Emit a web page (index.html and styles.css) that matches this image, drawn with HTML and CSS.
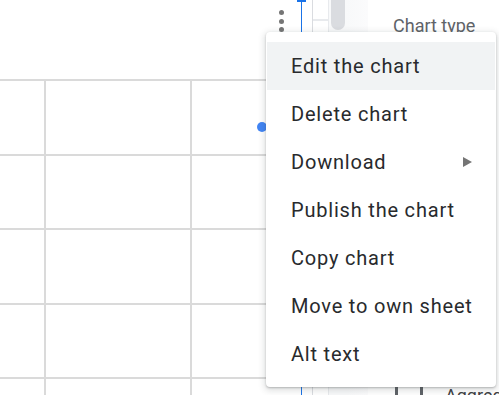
FILE: index.html
```html
<!DOCTYPE html>
<html>
<head>
<meta charset="utf-8">
<link rel="stylesheet" href="styles.css">
</head>
<body>
<div class="page">
  <div class="chart">
    <div class="chart-top">
      <div class="kebab"><span></span><span></span><span></span></div>
    </div>
    <div class="grid">
      <span class="dot"></span>
    </div>
  </div>
  <div class="sheet-col">
    <div class="col-a"><span class="blue-cap"></span></div>
    <div class="col-b"></div>
    <div class="col-c"><span class="thumb"></span></div>
    <div class="col-d"></div>
  </div>
  <div class="panel">
    <div class="panel-title">Chart type</div>
    <div class="panel-spacer"></div>
    <div class="panel-bottom">
      <span class="bar"></span>
      <span class="bar"></span>
      <span class="agg">Aggregate</span>
    </div>
  </div>
</div>

<div class="menu">
  <div class="item active">Edit the chart</div>
  <div class="item">Delete chart</div>
  <div class="item">Download<span class="arrow"></span></div>
  <div class="item">Publish the chart</div>
  <div class="item">Copy chart</div>
  <div class="item">Move to own sheet</div>
  <div class="item">Alt text</div>
</div>
</body>
</html>
```

FILE: styles.css
```css
* { box-sizing: border-box; }
html, body {
  margin: 0;
  padding: 0;
  width: 499px;
  height: 395px;
  overflow: hidden;
  background: #fff;
  font-family: Roboto, "Liberation Sans", sans-serif;
}
.page {
  display: flex;
  height: 395px;
}
.chart {
  width: 297px;
  flex-shrink: 0;
  display: flex;
  flex-direction: column;
}
.chart-top {
  height: 79px;
  display: flex;
  justify-content: flex-end;
  padding: 10px 13px 0 0;
}
.kebab {
  display: flex;
  flex-direction: column;
  gap: 3.5px;
}
.kebab span {
  width: 5px;
  height: 5px;
  border-radius: 50%;
  background: #757575;
}
.grid {
  flex: 1;
  position: relative;
  background-image:
    linear-gradient(to right, transparent 0 44px, #dadada 44px 46px, transparent 46px 190px, #dadada 190px 192px, transparent 192px),
    linear-gradient(to bottom, #dadada 0 2px, transparent 2px 75px, #dadada 75px 77px, transparent 77px);
  background-size: 100% 100%, 100% 149px;
  background-repeat: no-repeat, repeat-y;
}
.dot {
  position: absolute;
  left: 257px;
  top: 43px;
  width: 10px;
  height: 10px;
  border-radius: 50%;
  background: #4285f4;
}
.sheet-col {
  width: 71px;
  flex-shrink: 0;
  display: flex;
}
.col-a {
  width: 12px;
  border-left: 1px solid #1a73e8;
  margin-left: 4px;
  position: relative;
  border-right: 1px solid #dadce0;
}
.blue-cap {
  position: absolute;
  left: -5px;
  top: 0;
  width: 9px;
  height: 2px;
  background: #1a73e8;
}
.col-b {
  width: 16px;
  background: linear-gradient(to bottom, transparent 0 19px, #e8eaed 19px 21px, transparent 21px);
  border-right: 1px solid #e8eaed;
}
.col-c {
  width: 18px;
  background: #f8f9fa;
  display: flex;
  justify-content: center;
}
.thumb {
  width: 14px;
  height: 30px;
  background: #dadce0;
  border-radius: 0 0 7px 7px;
}
.col-d {
  flex: 1;
  background: linear-gradient(to right, #f8f9fa, #fbfbfc);
}
.panel {
  flex: 1;
  min-width: 0;
  overflow: hidden;
  display: flex;
  flex-direction: column;
  padding-left: 25px;
}
.panel-title {
  margin-top: 16px;
  font-size: 18px;
  color: #5f6368;
  line-height: 20px;
  white-space: nowrap;
}
.panel-spacer { flex: 1; }
.panel-bottom {
  height: 8px;
  display: flex;
  align-items: flex-start;
  padding-left: 2px;
  white-space: nowrap;
}
.bar {
  flex-shrink: 0;
  width: 3px;
  height: 20px;
  background: #5f6368;
  margin-right: 22px;
}
.agg {
  font-size: 18px;
  color: #3c4043;
  line-height: 20px;
  margin-top: -1px;
}

.menu {
  position: absolute;
  left: 266px;
  top: 32px;
  width: 230px;
  background: #fff;
  border-radius: 4px;
  padding: 10px 0 9px;
  box-shadow: 0 2px 6px 2px rgba(60, 64, 67, 0.15), 0 1px 2px 0 rgba(60, 64, 67, 0.3);
}
.item {
  height: 48px;
  display: flex;
  align-items: center;
  padding-left: 25px;
  padding-right: 24px;
  font-size: 20px;
  color: #282a2d;
  letter-spacing: 0.8px;
  white-space: nowrap;
}
.item.active {
  background: #f1f3f4;
  margin: 0 1px;
  padding-left: 24px;
}
.arrow {
  margin-left: auto;
  width: 0;
  height: 0;
  border-top: 5px solid transparent;
  border-bottom: 5px solid transparent;
  border-left: 9px solid #757575;
}
```
